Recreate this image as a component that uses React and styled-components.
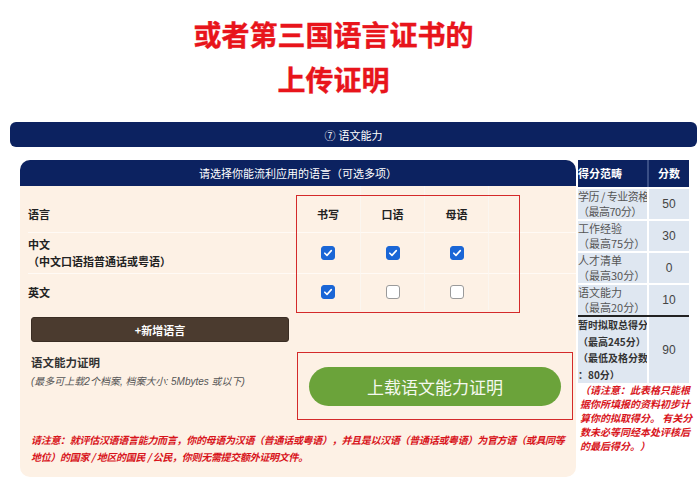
import React from "react";
import styled, { createGlobalStyle } from "styled-components";

const GlobalStyle = createGlobalStyle`
  body {
    margin: 0;
    background: #fff;
    font-family: "Noto Sans CJK SC", "Noto Sans", sans-serif;
  }
`;

const Page = styled.div`
  width: 700px;
  height: 490px;
  overflow: hidden;
`;

const Title = styled.h1`
  margin: 0;
  padding: 12px 33px 0 0;
  text-align: center;
  font-size: 28px;
  line-height: 45px;
  font-weight: 700;
  color: #e8141b;
  -webkit-text-stroke: 0.4px #e8141b;
`;

const SectionBar = styled.div`
  margin: 20px 3px 0 10px;
  height: 25px;
  border-radius: 6px;
  background: #0c2260;
  color: #fff;
  font-size: 11px;
  display: flex;
  align-items: center;
  justify-content: center;
  gap: 3px;
`;

const Content = styled.div`
  display: flex;
  align-items: flex-start;
  gap: 2px;
  margin-top: 13px;
  padding-left: 20px;
`;

const Card = styled.div`
  width: 556px;
  background: #fdf1e5;
  border-radius: 10px;
  padding-bottom: 12px;
`;

const CardHeader = styled.div`
  height: 26px;
  border-radius: 10px 10px 0 0;
  background: #0c2260;
  color: #fff;
  font-size: 11px;
  display: flex;
  align-items: center;
  justify-content: center;
`;

const Grid = styled.div`
  position: relative;
  display: grid;
  grid-template-columns: 268px 64px 64px 64px 1fr;
  grid-template-rows: 47px 41px 36px;
  margin-left: 8px;
`;

const Cell = styled.div`
  display: flex;
  flex-direction: column;
  justify-content: center;
  align-items: ${({ $center }) => ($center ? "center" : "flex-start")};
  padding-top: ${({ $head }) => ($head ? "10px" : "0")};
  border-bottom: ${({ $line }) => ($line ? "1px solid #fffaf5" : "none")};
  border-left: ${({ $col }) => ($col ? "1px solid #fbf6f0" : "none")};
  font-size: 11px;
  font-weight: 700;
  color: #222;
  line-height: 17px;
`;

const Note = styled.span`
  font-weight: 700;
`;

const RedBox = styled.div`
  position: absolute;
  left: 268px;
  top: 9px;
  width: 224px;
  height: 118px;
  border: 1.5px solid #d42a2a;
  box-sizing: border-box;
  pointer-events: none;
`;

const Box = styled.span`
  width: 14px;
  height: 14px;
  box-sizing: border-box;
  border-radius: 3px;
  display: flex;
  align-items: center;
  justify-content: center;
  background: ${({ $on }) => ($on ? "#1a66d6" : "#fff")};
  border: 1px solid ${({ $on }) => ($on ? "#1a66d6" : "#9a9a9a")};
`;

const Check = ({ on }) => (
  <Box $on={on}>
    {on && (
      <svg width="10" height="10" viewBox="0 0 10 10">
        <path d="M1.8 5.2 L4 7.4 L8.3 2.6" fill="none" stroke="#fff" strokeWidth="1.6" strokeLinecap="round" strokeLinejoin="round" />
      </svg>
    )}
  </Box>
);

const AddButton = styled.button`
  display: block;
  width: 258px;
  height: 25px;
  margin: 7px 0 0 11px;
  border: 1px solid #3a2d24;
  border-radius: 3px;
  background: #4b3b2f;
  color: #fff;
  font-family: inherit;
  font-size: 11px;
  font-weight: 700;
`;

const ProofRow = styled.div`
  display: flex;
  margin: 10px 0 0 11px;
`;

const ProofText = styled.div`
  width: 266px;
  padding-top: 2px;
`;

const ProofLabel = styled.div`
  font-size: 11.5px;
  font-weight: 700;
  color: #333;
  line-height: 16px;
`;

const ProofHint = styled.div`
  margin-top: 4px;
  font-family: "Liberation Sans", "Noto Sans CJK SC", sans-serif;
  font-size: 10px;
  font-style: italic;
  color: #555;
  line-height: 16px;
`;

const UploadFrame = styled.div`
  width: 276px;
  height: 68px;
  box-sizing: border-box;
  border: 1.5px solid #d42a2a;
  display: flex;
  align-items: center;
  justify-content: center;
`;

const UploadButton = styled.button`
  width: 252px;
  height: 39px;
  border: none;
  border-radius: 20px;
  background: #6ba33a;
  color: #f4f8ee;
  font-family: inherit;
  font-size: 17px;
  font-weight: 400;
`;

const Warning = styled.p`
  margin: 11px 0 0 11px;
  font-size: 10px;
  line-height: 17px;
  font-weight: 700;
  font-style: italic;
  color: #d8141b;
  white-space: nowrap;
  letter-spacing: -0.3px;
`;

const ScoreTable = styled.div`
  width: 111px;
`;

const ScoreRow = styled.div`
  display: grid;
  grid-template-columns: 69px 42px;
  min-height: ${({ $h }) => $h}px;
  background: ${({ $head }) => ($head ? "#0c2260" : "#dfe7f1")};
  border-bottom: ${({ $thick }) => ($thick ? "2px solid #222" : "2px solid #fff")};
  box-sizing: border-box;
`;

const ScoreCell = styled.div`
  display: flex;
  flex-direction: column;
  justify-content: center;
  align-items: ${({ $center }) => ($center ? "center" : "flex-start")};
  border-left: ${({ $center }) => ($center ? "2px solid #fff" : "none")};
  font-size: ${({ $small }) => ($small ? "10px" : "11px")};
  font-weight: ${({ $bold }) => ($bold ? 700 : 400)};
  color: ${({ $head, $bold }) => ($head ? "#fff" : $bold ? "#333" : "#555")};
  line-height: ${({ $lh }) => $lh || 15}px;
  white-space: nowrap;
  letter-spacing: ${({ $tight }) => ($tight ? "-0.5px" : "0")};
`;

const Value = styled.span`
  font-family: "Liberation Sans", sans-serif;
  font-size: 12px;
  color: #444;
`;

const TableNote = styled.p`
  margin: 0 0 0 2px;
  font-size: 10px;
  line-height: 14px;
  font-weight: 700;
  font-style: italic;
  color: #d8141b;
  white-space: nowrap;
`;

const scores = [
  { name: "学历 / 专业资格", max: "（最高70分）", value: "50", tight: true },
  { name: "工作经验", max: "（最高75分）", value: "30" },
  { name: "人才清单", max: "（最高30分）", value: "0" },
  { name: "语文能力", max: "（最高20分）", value: "10" },
];

const langs = [
  { name: "中文", sub: "（中文口语指普通话或粤语）", checks: [true, true, true] },
  { name: "英文", checks: [true, false, false] },
];

export default function App() {
  return (
    <Page>
      <GlobalStyle />
      <Title>
        或者第三国语言证书的
        <br />
        上传证明
      </Title>
      <SectionBar>
        <span>⑦</span>
        <span>语文能力</span>
      </SectionBar>
      <Content>
        <Card>
          <CardHeader>请选择你能流利应用的语言（可选多项）</CardHeader>
          <Grid>
            <Cell $head $line>语言</Cell>
            {["书写", "口语", "母语"].map((h, i) => (
              <Cell key={h} $head $line $center $col={i > 0}>
                {h}
              </Cell>
            ))}
            <Cell $head $line $col />
            {langs.map((l, r) => (
              <React.Fragment key={l.name}>
                <Cell $line={r === 0}>
                  <span>{l.name}</span>
                  {l.sub && <Note>{l.sub}</Note>}
                </Cell>
                {l.checks.map((c, i) => (
                  <Cell key={i} $center $line={r === 0} $col={i > 0}>
                    <Check on={c} />
                  </Cell>
                ))}
                <Cell $line={r === 0} $col />
              </React.Fragment>
            ))}
            <RedBox />
          </Grid>
          <AddButton>+新增语言</AddButton>
          <ProofRow>
            <ProofText>
              <ProofLabel>语文能力证明</ProofLabel>
              <ProofHint>(最多可上载2个档案, 档案大小: 5Mbytes 或以下)</ProofHint>
            </ProofText>
            <UploadFrame>
              <UploadButton>上载语文能力证明</UploadButton>
            </UploadFrame>
          </ProofRow>
          <Warning>
            请注意：就评估汉语语言能力而言，你的母语为汉语（普通话或粤语），并且是以汉语（普通话或粤语）为官方语（或具同等
            <br />
            地位）的国家 / 地区的国民 / 公民，你则无需提交额外证明文件。
          </Warning>
        </Card>
        <ScoreTable>
          <ScoreRow $head $h={29}>
            <ScoreCell $head $bold>得分范畴</ScoreCell>
            <ScoreCell $head $bold $center style={{ borderLeftColor: "#3a4f86" }}>
              分数
            </ScoreCell>
          </ScoreRow>
          {scores.map((s, i) => (
            <ScoreRow key={s.name} $h={i === 3 ? 28 : 32} $thick={i === 3}>
              <ScoreCell $tight={s.tight}>
                <span>{s.name}</span>
                <span>{s.max}</span>
              </ScoreCell>
              <ScoreCell $center>
                <Value>{s.value}</Value>
              </ScoreCell>
            </ScoreRow>
          ))}
          <ScoreRow $h={62} style={{ borderBottom: "none" }}>
            <ScoreCell $bold $small $lh={16.5}>
              <span>暂时拟取总得分</span>
              <span>（最高245分）</span>
              <span>（最低及格分数</span>
              <span>：80分）</span>
            </ScoreCell>
            <ScoreCell $center>
              <Value>90</Value>
            </ScoreCell>
          </ScoreRow>
          <TableNote>
            （请注意：此表格只能根
            <br />
            据你所填报的资料初步计
            <br />
            算你的拟取得分。 有关分
            <br />
            数未必等同经本处评核后
            <br />
            的最后得分。）
          </TableNote>
        </ScoreTable>
      </Content>
    </Page>
  );
}
